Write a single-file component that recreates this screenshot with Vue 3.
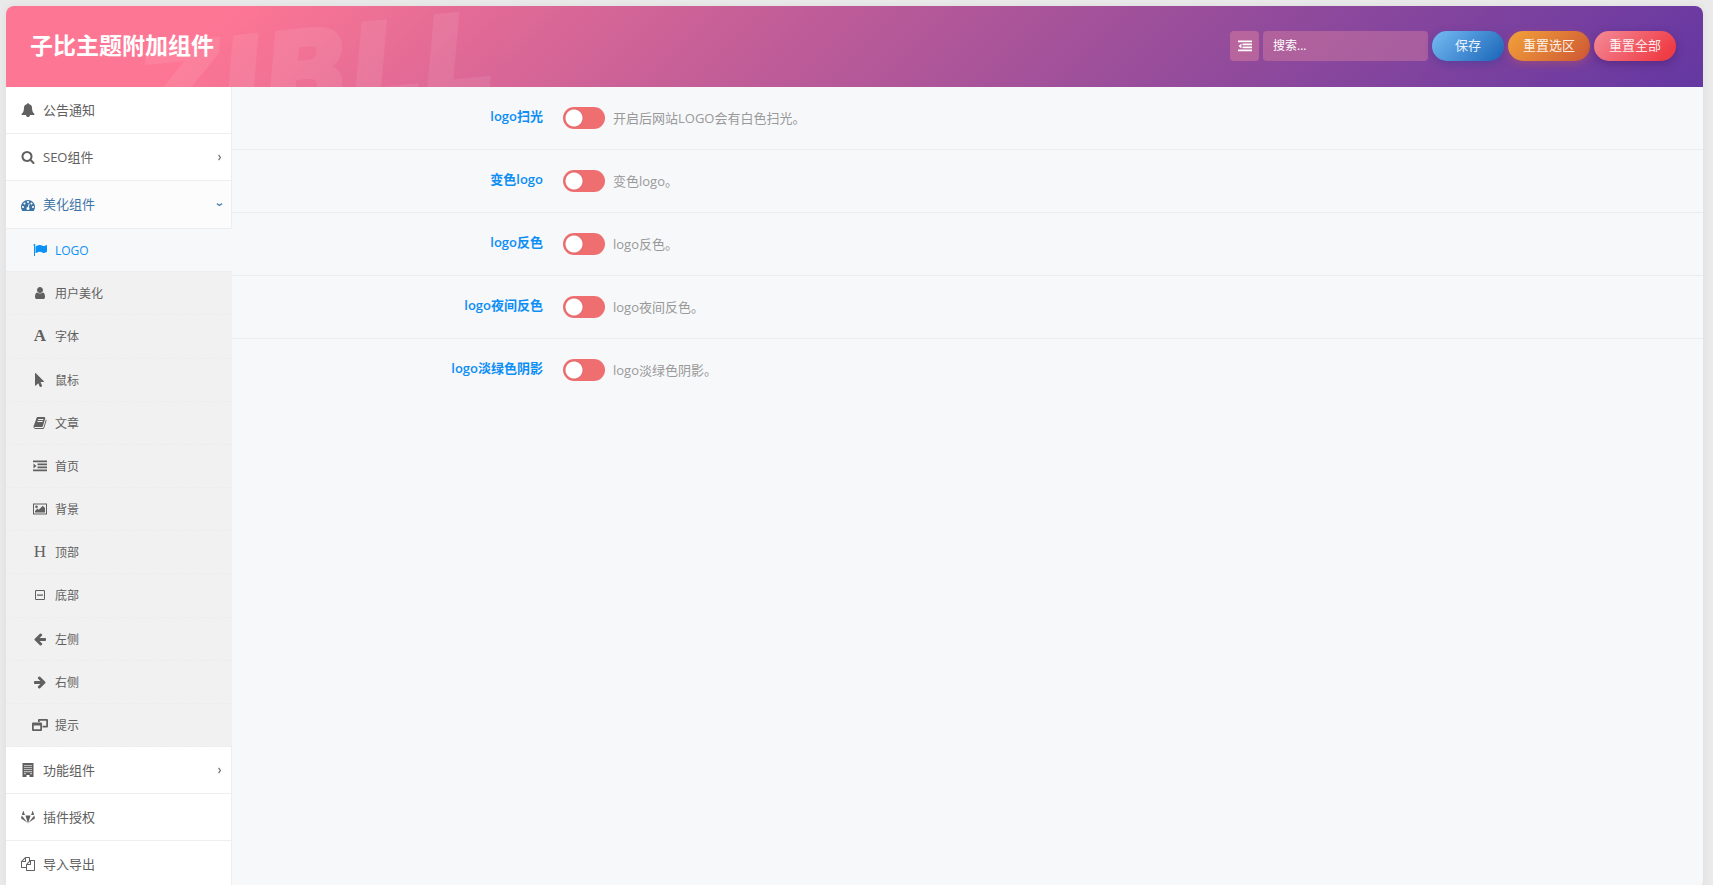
<script setup>
import { ref } from 'vue'

const icons = {
  bell: 'M1728 1408q0 52-38 90t-90 38h-448q0 106-75 181t-181 75-181-75-75-181h-448q-52 0-90-38t-38-90q50-42 91-88t85-119.5 74.5-158.5 50-206 19.5-260q0-152 117-282.5t307-158.5q-8-19-8-39 0-40 28-68t68-28 68 28 28 68q0 20-8 39 190 28 307 158.5t117 282.5q0 139 19.5 260t50 206 74.5 158.5 85 119.5 91 88z',
  search: 'M1216 832q0-185-131.5-316.5t-316.5-131.5-316.5 131.5-131.5 316.5 131.5 316.5 316.5 131.5 316.5-131.5 131.5-316.5zm512 832q0 52-38 90t-90 38q-54 0-90-38l-343-342q-179 124-399 124-143 0-273.5-55.5t-225-150-150-225-55.5-273.5 55.5-273.5 150-225 225-150 273.5-55.5 273.5 55.5 225 150 150 225 55.5 273.5q0 220-124 399l343 343q37 37 37 90z',
  gauge: 'M384 1152q0-53-37.5-90.5t-90.5-37.5-90.5 37.5-37.5 90.5 37.5 90.5 90.5 37.5 90.5-37.5 37.5-90.5zm192-448q0-53-37.5-90.5t-90.5-37.5-90.5 37.5-37.5 90.5 37.5 90.5 90.5 37.5 90.5-37.5 37.5-90.5zm428 481l101-382q6-26-7.5-48.5t-38.5-29.5-48 6.5-30 39.5l-101 382q-60 5-107 43.5t-63 98.5q-20 77 20 146t117 89 146-20 89-117q16-60-6-117t-72-91zm660-33q0-53-37.5-90.5t-90.5-37.5-90.5 37.5-37.5 90.5 37.5 90.5 90.5 37.5 90.5-37.5 37.5-90.5zm-640-640q0-53-37.5-90.5t-90.5-37.5-90.5 37.5-37.5 90.5 37.5 90.5 90.5 37.5 90.5-37.5 37.5-90.5zm448 192q0-53-37.5-90.5t-90.5-37.5-90.5 37.5-37.5 90.5 37.5 90.5 90.5 37.5 90.5-37.5 37.5-90.5zm320 448q0 261-141 483-19 29-54 29h-1402q-35 0-54-29-141-221-141-483 0-182 71-348t191-286 286-191 348-71 348 71 286 191 191 286 71 348z',
  flag: 'M320 256q0 72-64 110v1266q0 13-9.5 22.5t-22.5 9.5h-64q-13 0-22.5-9.5t-9.5-22.5v-1266q-64-38-64-110 0-53 37.5-90.5t90.5-37.5 90.5 37.5 37.5 90.5zm1472 64v763q0 25-12.5 38.5t-39.5 27.5q-215 116-369 116-61 0-123.5-22t-108.5-48-115.5-48-142.5-22q-192 0-464 146-17 9-33 9-26 0-45-19t-19-45v-742q0-32 31-55 21-14 79-43 236-120 421-120 107 0 200 29t219 88q38 19 88 19 54 0 117.5-21t110-47 88-47 54.5-21q26 0 45 19t19 45z',
  user: 'M1536 1399q0 109-62.5 187t-150.5 78h-854q-88 0-150.5-78t-62.5-187q0-85 8.5-160.5t31.5-152 58.5-131 94-89 134.5-34.5q131 128 313 128t313-128q76 0 134.5 34.5t94 89 58.5 131 31.5 152 8.5 160.5zm-256-887q0 159-112.5 271.5t-271.5 112.5-271.5-112.5-112.5-271.5 112.5-271.5 271.5-112.5 271.5 112.5 112.5 271.5z',
  pointer: 'M1389 1043q31 30 14 69-17 40-59 40h-382l201 476q10 25 0 49t-34 35l-177 75q-25 10-49 0t-35-34l-191-452-312 312q-19 19-45 19-12 0-24-5-40-17-40-59v-1504q0-42 40-59 12-5 24-5 27 0 45 19z',
  book: 'M1703 478q40 57 18 129l-275 906q-19 64-76.5 107.5t-122.5 43.5h-923q-77 0-148.5-53.5t-99.5-131.5q-24-67-2-127 0-4 3-27t4-37q1-8-3-21.5t-3-19.5q2-11 8-21t16.5-23.5 16.5-23.5q23-38 45-91.5t30-91.5q3-10 .5-30t-.5-28q3-11 17-28t17-23q21-36 42-92t25-90q1-9-2.5-32t.5-28q4-13 22-30.5t22-22.5q19-26 42.5-84.5t27.5-96.5q1-8-3-25.5t-2-26.5q2-8 9-18t18-23 17-21q8-12 16.5-30.5t15-35 16-36 19.5-32 26.5-23.5 36-11.5 47.5 5.5l-1 3q38-9 51-9h761q74 0 114 56t18 130l-274 906q-36 119-71.5 153.5t-128.5 34.5h-869q-27 0-38 15-11 16-1 43 24 70 144 70h923q29 0 56-15.5t35-41.5l300-987q7-22 5-57 38 15 59 43zm-1064 2q-4 13 2 22.5t20 9.5h608q13 0 25.5-9.5t16.5-22.5l21-64q4-13-2-22.5t-20-9.5h-608q-13 0-25.5 9.5t-16.5 22.5zm-83 256q-4 13 2 22.5t20 9.5h608q13 0 25.5-9.5t16.5-22.5l21-64q4-13-2-22.5t-20-9.5h-608q-13 0-25.5 9.5t-16.5 22.5z',
  indent: 'M0 192h1792v224H0zM576 576h1216v224H576zM576 960h1216v224H576zM0 1344h1792v224H0zM64 560l380 320-380 320z',
  outdent: 'M0 192h1792v224H0zM576 576h1216v224H576zM576 960h1216v224H576zM0 1344h1792v224H0zM444 560v640L64 880z',
  image: 'M0 192h1792v1408H0zM128 320v1152h1536V320zM448 448a170 170 0 1 1 0 340a170 170 0 0 1 0-340zM256 1344v-192l320-320 160 160 512-512 288 288v576z',
  minus: 'M416 256h960q160 0 160 160v960q0 160-160 160H416q-160 0-160-160V416q0-160 160-160zM448 384q-64 0-64 64v896q0 64 64 64h896q64 0 64-64V448q0-64-64-64zM512 816h768v160H512z',
  left: 'M1664 896v128q0 53-32.5 90.5t-84.5 37.5h-704l293 294q38 36 38 90t-38 90l-75 76q-37 37-90 37-52 0-91-37l-651-652q-37-37-37-90 0-52 37-91l651-650q38-38 91-38 52 0 90 38l75 74q38 38 38 91t-38 91l-293 293h704q52 0 84.5 37.5t32.5 90.5z',
  right: 'M128 896v128q0 53 32.5 90.5t84.5 37.5h704l-293 294q-38 36-38 90t38 90l75 76q37 37 90 37 52 0 91-37l651-652q37-37 37-90 0-52-37-91l-651-650q-38-38-91-38-52 0-90 38l-75 74q-38 38-38 91t38 91l293 293h-704q-52 0-84.5 37.5t-32.5 90.5z',
  windows: 'M896 128h1024q128 0 128 128v832q0 128-128 128h-576v-224h480V352H992v160H768V256q0-128 128-128zM128 576h1024q128 0 128 128v832q0 128-128 128H128Q0 1664 0 1536V704q0-128 128-128zM224 960v480h832V960z',
  building: 'M192 0h1408v1792h-512v-256H704v256H192zM432 240v150h150V240zM690 240v150h150V240zM950 240v150h150V240zM1210 240v150h150V240zM432 500v150h150V500zM690 500v150h150V500zM950 500v150h150V500zM1210 500v150h150V500zM432 760v150h150V760zM690 760v150h150V760zM950 760v150h150V760zM1210 760v150h150V760zM432 1020v150h150v-150zM690 1020v150h150v-150zM950 1020v150h150v-150zM1210 1020v150h150v-150zM432 1280v150h150v-150zM1210 1280v150h150v-150z',
  gitlab: 'M104 706l720 925L28 1091q-40-34-25-77zM566 706h660l-330 1015zM1688 706l-720 925 796-540q40-34 25-77zM305 94l198 560H118l154-560q8-23 33 0zM1520 94l154 560h-385l198-560q8-23 33 0z',
  copy: 'M1696 384q40 0 68 28t28 68v1216q0 40-28 68t-68 28h-960q-40 0-68-28t-28-68v-288h-544q-40 0-68-28t-28-68v-672q0-40 20-88t48-76l408-408q28-28 76-48t88-20h416q40 0 68 28t28 68v328q68-40 128-40h416zm-544 213l-299 299h299v-299zm-640-384l-299 299h299v-299zm196 647l316-316v-416h-384v416q0 40-28 68t-68 28h-416v640h512v-256q0-40 20-88t48-76zm956 804v-1152h-384v416q0 40-28 68t-68 28h-416v640h896z'
}

const menu = [
  { text: '公告通知', icon: 'bell' },
  { text: 'SEO组件', icon: 'search', arrow: true },
  {
    text: '美化组件',
    icon: 'gauge',
    arrow: true,
    open: true,
    children: [
      { text: 'LOGO', icon: 'flag', active: true },
      { text: '用户美化', icon: 'user' },
      { text: '字体', letter: 'A', bold: true },
      { text: '鼠标', icon: 'pointer' },
      { text: '文章', icon: 'book' },
      { text: '首页', icon: 'indent' },
      { text: '背景', icon: 'image' },
      { text: '顶部', letter: 'H' },
      { text: '底部', icon: 'minus' },
      { text: '左侧', icon: 'left' },
      { text: '右侧', icon: 'right' },
      { text: '提示', icon: 'windows', box: '0 0 2048 1792' }
    ]
  },
  { text: '功能组件', icon: 'building', arrow: true },
  { text: '插件授权', icon: 'gitlab' },
  { text: '导入导出', icon: 'copy' }
]

const fields = ref([
  { id: 'sweep', label: 'logo扫光', desc: '开启后网站LOGO会有白色扫光。', on: false },
  { id: 'tint', label: '变色logo', desc: '变色logo。', on: false },
  { id: 'invert', label: 'logo反色', desc: 'logo反色。', on: false },
  { id: 'night', label: 'logo夜间反色', desc: 'logo夜间反色。', on: false },
  { id: 'shadow', label: 'logo淡绿色阴影', desc: 'logo淡绿色阴影。', on: false }
])
const keyword = ref('')
</script>

<template>
  <div class="page">
    <div class="panel">
      <header class="header">
        <span class="watermark" aria-hidden="true">ZIBLL</span>
        <h1 class="title">子比主题附加组件</h1>
        <form class="tools" @submit.prevent>
          <button type="button" class="expand" aria-label="展开">
            <svg viewBox="0 0 1792 1792"><path :d="icons.outdent" /></svg>
          </button>
          <input v-model="keyword" class="search" type="text" placeholder="搜索..." aria-label="搜索" />
          <button type="submit" class="btn save">保存</button>
          <button type="button" class="btn section">重置选区</button>
          <button type="button" class="btn all">重置全部</button>
        </form>
      </header>
      <div class="body">
        <nav class="nav">
          <ul class="list">
            <li v-for="item in menu" :key="item.text">
              <a href="#" class="item" :class="{ open: item.open }">
                <svg class="icon" viewBox="0 0 1792 1792" fill-rule="evenodd"><path :d="icons[item.icon]" /></svg>
                <span class="text">{{ item.text }}</span>
                <svg v-if="item.arrow" class="arrow" viewBox="0 0 8 8">
                  <path :d="item.open ? 'M1 3l3 2L7 3' : 'M3 1l2 3L3 7'" />
                </svg>
              </a>
              <ul v-if="item.children" class="sub">
                <li v-for="child in item.children" :key="child.text">
                  <a href="#" class="child" :class="{ active: child.active }">
                    <span v-if="child.letter" class="letter" :class="{ bold: child.bold }" aria-hidden="true">{{ child.letter }}</span>
                    <svg v-else class="icon" :class="{ wide: child.box }" :viewBox="child.box || '0 0 1792 1792'" fill-rule="evenodd"><path :d="icons[child.icon]" /></svg>
                    <span>{{ child.text }}</span>
                  </a>
                </li>
              </ul>
            </li>
          </ul>
        </nav>
        <main class="content">
          <div v-for="field in fields" :key="field.id" class="field">
            <label class="label" :for="field.id">{{ field.label }}</label>
            <input :id="field.id" v-model="field.on" class="switch" type="checkbox" />
            <span class="desc">{{ field.desc }}</span>
          </div>
        </main>
      </div>
    </div>
  </div>
</template>

<style>
body {
  margin: 0;
  background: #eaeaea;
}
</style>

<style scoped>
.page {
  box-sizing: border-box;
  height: 100vh;
  overflow: hidden;
  padding: 6px 10px 0 6px;
  font-family: "Open Sans", "Noto Sans CJK SC", sans-serif;
  font-size: 13px;
  color: #555;
}
.panel {
  border-radius: 8px;
  box-shadow: 0 0 10px rgba(0, 0, 0, 0.06);
  background: #f7f8fa;
}
.header {
  position: relative;
  display: flex;
  align-items: center;
  justify-content: space-between;
  box-sizing: border-box;
  height: 81px;
  padding: 0 27px 2px 24px;
  overflow: hidden;
  border-radius: 8px 8px 0 0;
  background: linear-gradient(135deg, #fd7794 13%, #cb6197 39%, #954c9b 70%, #6638a2 99%);
}
.watermark {
  position: absolute;
  left: 132px;
  top: 10px;
  font: italic bold 114px/114px "DejaVu Sans", sans-serif;
  color: #fff;
  -webkit-text-stroke: 4px #fff;
  opacity: 0.08;
  transform: rotate(-6deg);
}
.title {
  position: relative;
  margin: 0;
  padding-bottom: 2px;
  font-size: 23px;
  line-height: 32px;
  font-weight: 700;
  color: #fff;
}
.tools {
  position: relative;
  display: flex;
  align-items: center;
  gap: 4px;
}
.tools button,
.search {
  box-sizing: border-box;
  border: 0;
  height: 30px;
  font-family: inherit;
}
.expand {
  display: flex;
  align-items: center;
  justify-content: center;
  width: 29px;
  padding: 0;
  border-radius: 4px;
  background: rgba(240, 140, 160, 0.4);
}
.expand svg {
  width: 14px;
  height: 14px;
  fill: #fff;
}
.search {
  width: 165px;
  padding: 0 10px;
  border-radius: 4px;
  background: rgba(235, 140, 160, 0.36);
  font-size: 12px;
  color: #fff;
}
.search::placeholder {
  color: #fff;
  opacity: 1;
}
.btn {
  width: 82px;
  padding: 0 0 2px;
  border-radius: 15px;
  font-size: 13px;
  color: rgba(255, 255, 255, 0.9);
}
.save {
  width: 72px;
  background: linear-gradient(135deg, #6db3ee 10%, #226dbd 90%);
  box-shadow: 0 3px 8px rgba(40, 60, 150, 0.4);
}
.section {
  background: linear-gradient(135deg, #ee9a39 10%, #d15e34 90%);
  box-shadow: 0 3px 8px rgba(200, 90, 80, 0.4);
}
.all {
  background: linear-gradient(135deg, #f3828f 10%, #ef3d46 85%);
  box-shadow: 0 3px 8px rgba(60, 20, 90, 0.4);
}
.body {
  display: flex;
  min-height: calc(100vh - 87px);
}
.nav {
  flex: none;
  width: 226px;
}
.list,
.sub {
  margin: 0;
  padding: 0;
  list-style: none;
}
.item,
.child {
  display: flex;
  align-items: center;
  box-sizing: border-box;
  text-decoration: none;
  color: #606060;
}
.item {
  height: 47px;
  padding: 0 8px 0 15px;
  gap: 8px;
  border-right: 1px solid #eee;
  border-bottom: 1px solid #eee;
  background: #fff;
}
.item.open {
  height: 48px;
  background: #fcfcfd;
  color: #3e74a5;
}
.text {
  padding-bottom: 2px;
}
.icon {
  flex: none;
  width: 14px;
  height: 14px;
  fill: currentColor;
}
.icon.wide {
  width: 16px;
  margin: 0 -1px;
}
.arrow {
  width: 7px;
  height: 7px;
  margin-left: auto;
  fill: none;
  stroke: currentColor;
  stroke-width: 1.5;
  opacity: 0.85;
}
.sub {
  display: grid;
  grid-auto-rows: 1fr;
  height: 518px;
  background: #f1f1f1;
}
.child {
  height: 100%;
  padding-left: 27px;
  gap: 8px;
  border-bottom: 1px dashed #ececec;
  font-size: 12px;
}
.child.active {
  border-bottom: 1px solid #eee;
  background: #f7f8fa;
  color: #0c92f6;
}
.letter {
  width: 14px;
  font: 17px/16px "Liberation Serif", serif;
  text-align: center;
}
.letter.bold {
  font-weight: 700;
}
.content {
  flex: 1;
}
.field {
  display: flex;
  align-items: center;
  box-sizing: border-box;
  height: 63px;
  border-bottom: 1px solid #ebedef;
}
.field:last-child {
  border-bottom-color: transparent;
}
.label {
  width: 311px;
  padding-bottom: 5px;
  text-align: right;
  font-weight: 600;
  color: #0c8ef5;
}
.switch {
  appearance: none;
  width: 42px;
  height: 22px;
  margin: 0 8px 0 20px;
  border-radius: 11px;
  background: radial-gradient(circle at 11px 11px, #fff 8px, #e0686c 9px, #ef6f70 10px);
}
.switch:checked {
  background: radial-gradient(circle at 31px 11px, #fff 8px, #4ab866 9px);
}
.desc {
  padding-bottom: 2px;
  color: #999;
}
</style>
